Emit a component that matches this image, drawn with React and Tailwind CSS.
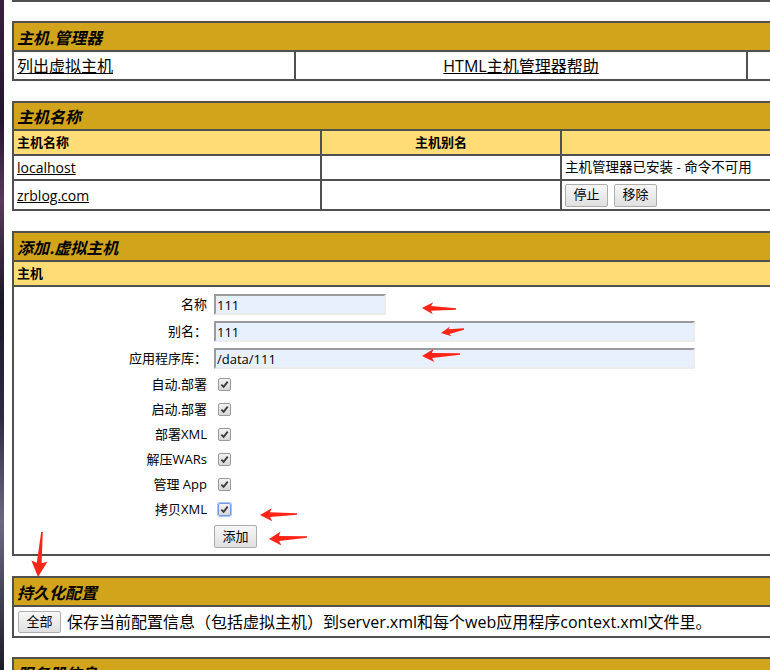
import React from "react";

const line = "border-[#505050]";

function arrowPoints(tx, ty, ex, ey, hl = 11, hw = 6, sw = 2.4) {
  const dx = ex - tx;
  const dy = ey - ty;
  const len = Math.hypot(dx, dy);
  const ux = dx / len;
  const uy = dy / len;
  const nx = -uy;
  const ny = ux;
  const p = (a, b) => [tx + ux * a + nx * b, ty + uy * a + ny * b];
  const pts = [p(0, 0), p(hl, hw), p(hl - 2, sw), p(len, 0.8), p(len, -0.8), p(hl - 2, -sw), p(hl, -hw)];
  return pts.map((q) => q.map((v) => v.toFixed(1)).join(",")).join(" ");
}

const arrows = [
  [422, 308, 456, 309, 11, 6],
  [441, 333, 464, 329, 10, 5],
  [422, 356, 460, 354, 12, 6.5],
  [260, 515, 297, 514, 12, 6.5],
  [269, 539, 307, 537, 12, 7],
  [38, 577, 42, 532, 16, 8],
];

const Check = ({ focused }) => (
  <span
    className={`ml-[4px] w-[13px] h-[13px] rounded-[2px] border flex items-center justify-center bg-[linear-gradient(#f2f2f2,#d6d6d6)] ${
      focused ? "border-[#6f9be6] ring-1 ring-[#a9c5f0]" : "border-[#9a9a9a]"
    }`}
  >
    <svg width="9" height="9" viewBox="0 0 10 10">
      <path d="M1.5 5.2 L4 7.6 L8.6 1.8" fill="none" stroke="#3a3a3a" strokeWidth="2" />
    </svg>
  </span>
);

const Btn = ({ children, className = "" }) => (
  <button
    className={`border border-[#adadad] rounded-[2px] bg-[linear-gradient(#f7f7f7,#e0e0e0)] text-[13px] text-black flex items-center justify-center ${className}`}
  >
    {children}
  </button>
);

const Title = ({ children, h = "h-[27px]" }) => (
  <div
    className={`${h} bg-[#D2A41C] flex items-center pl-[3px] text-[16px] font-bold italic font-['Noto_Sans_CJK_SC',sans-serif]`}
  >
    {children}
  </div>
);

const TextInput = ({ value, w }) => (
  <input
    readOnly
    defaultValue={value}
    className={`${w} h-[21px] bg-[#E8F0FE] border-2 border-t-[#9a9a9a] border-l-[#9a9a9a] border-r-[#ececec] border-b-[#ececec] px-[1px] text-[13px] text-black outline-none`}
  />
);

const FieldRow = ({ label, children, h = "h-[25px]" }) => (
  <div className={`flex items-center ${h}`}>
    <div className="w-[193px] text-right text-[13px]">{label}</div>
    <div className="ml-[7px] flex items-center">{children}</div>
  </div>
);

export default function App() {
  return (
    <div className="relative w-[770px] h-[670px] overflow-hidden flex bg-white text-black font-['Open_Sans','Noto_Sans_CJK_SC',sans-serif]">
      <div className="w-[4px] shrink-0 bg-[linear-gradient(180deg,#3a1f40_0%,#24162e_18%,#5a3a5c_30%,#1a1628_45%,#2e2a44_62%,#6a6a84_78%,#1a1a28_100%)]" />
      <div className="pl-[8px] flex flex-col">
        {/* end of previous table */}
        <div className={`w-[900px] h-[3px] border-b-2 border-l-2 ${line} flex`}>
          <div className={`w-[127px] border-r-2 ${line}`} />
        </div>

        {/* 主机.管理器 */}
        <div className={`mt-[19px] w-[900px] border-2 ${line}`}>
          <Title>主机.管理器</Title>
          <div className={`flex h-[29px] border-t-2 ${line} text-[16px]`}>
            <div className={`w-[282px] border-r-2 ${line} pl-[3px] flex items-center`}>
              <a href="#" className="underline">列出虚拟主机</a>
            </div>
            <div className={`w-[452px] border-r-2 ${line} flex items-center justify-center`}>
              <a href="#" className="underline">HTML主机管理器帮助</a>
            </div>
            <div className="flex-1" />
          </div>
        </div>

        {/* 主机名称 */}
        <div className={`mt-[20px] w-[900px] border-2 ${line}`}>
          <Title h="h-[26px]">主机名称</Title>
          <div className={`flex h-[25px] border-t-2 ${line} bg-[#FFDC75] text-[13px] font-bold`}>
            <div className={`w-[308px] border-r-2 ${line} pl-[3px] flex items-center`}>主机名称</div>
            <div className={`w-[240px] border-r-2 ${line} flex items-center justify-center`}>主机别名</div>
            <div className="flex-1" />
          </div>
          <div className={`flex h-[25px] border-t-2 ${line} text-[14px]`}>
            <div className={`w-[308px] border-r-2 ${line} pl-[3px] flex items-center`}>
              <a href="#" className="underline">localhost</a>
            </div>
            <div className={`w-[240px] border-r-2 ${line}`} />
            <div className="flex-1 pl-[3px] flex items-center text-[13.5px]">主机管理器已安装 - 命令不可用</div>
          </div>
          <div className={`flex h-[30px] border-t-2 ${line} text-[14px]`}>
            <div className={`w-[308px] border-r-2 ${line} pl-[3px] flex items-center`}>
              <a href="#" className="underline">zrblog.com</a>
            </div>
            <div className={`w-[240px] border-r-2 ${line}`} />
            <div className="flex-1 pl-[3px] flex items-center gap-[6px]">
              <Btn className="w-[43px] h-[23px]">停止</Btn>
              <Btn className="w-[43px] h-[23px]">移除</Btn>
            </div>
          </div>
        </div>

        {/* 添加.虚拟主机 */}
        <div className={`mt-[20px] w-[900px] border-2 ${line}`}>
          <Title>添加.虚拟主机</Title>
          <div className={`h-[25px] border-t-2 ${line} bg-[#FFDC75] text-[13px] font-bold pl-[3px] flex items-center`}>主机</div>
          <div className={`border-t-2 ${line} pt-[4px] pb-[3px]`}>
            <FieldRow label="名称" h="h-[27px]">
              <TextInput value="111" w="w-[172px]" />
            </FieldRow>
            <FieldRow label="别名：" h="h-[27px]">
              <TextInput value="111" w="w-[481px]" />
            </FieldRow>
            <FieldRow label="应用程序库：" h="h-[27px]">
              <TextInput value="/data/111" w="w-[481px]" />
            </FieldRow>
            <FieldRow label="自动.部署"><Check /></FieldRow>
            <FieldRow label="启动.部署"><Check /></FieldRow>
            <FieldRow label="部署XML"><Check /></FieldRow>
            <FieldRow label="解压WARs"><Check /></FieldRow>
            <FieldRow label="管理 App"><Check /></FieldRow>
            <FieldRow label="拷贝XML"><Check focused /></FieldRow>
            <FieldRow label="" h="h-[29px]">
              <Btn className="w-[43px] h-[23px]">添加</Btn>
            </FieldRow>
          </div>
        </div>

        {/* 持久化配置 */}
        <div className={`mt-[20px] w-[900px] border-2 ${line}`}>
          <Title>持久化配置</Title>
          <div className={`flex items-center h-[31px] border-t-2 ${line} pl-[4px] gap-[6px] text-[16px]`}>
            <Btn className="w-[43px] h-[22px]">全部</Btn>
            <span>保存当前配置信息（包括虚拟主机）到server.xml和每个web应用程序context.xml文件里。</span>
          </div>
        </div>

        {/* 服务器信息 */}
        <div className={`mt-[19px] w-[900px] border-2 ${line}`}>
          <Title>服务器信息</Title>
        </div>
      </div>

      <svg className="absolute left-0 top-0 pointer-events-none" width="770" height="670">
        {arrows.map(([tx, ty, ex, ey, hl, hw], i) => (
          <polygon key={i} points={arrowPoints(tx, ty, ex, ey, hl, hw)} fill="#ff2418" />
        ))}
      </svg>
    </div>
  );
}
